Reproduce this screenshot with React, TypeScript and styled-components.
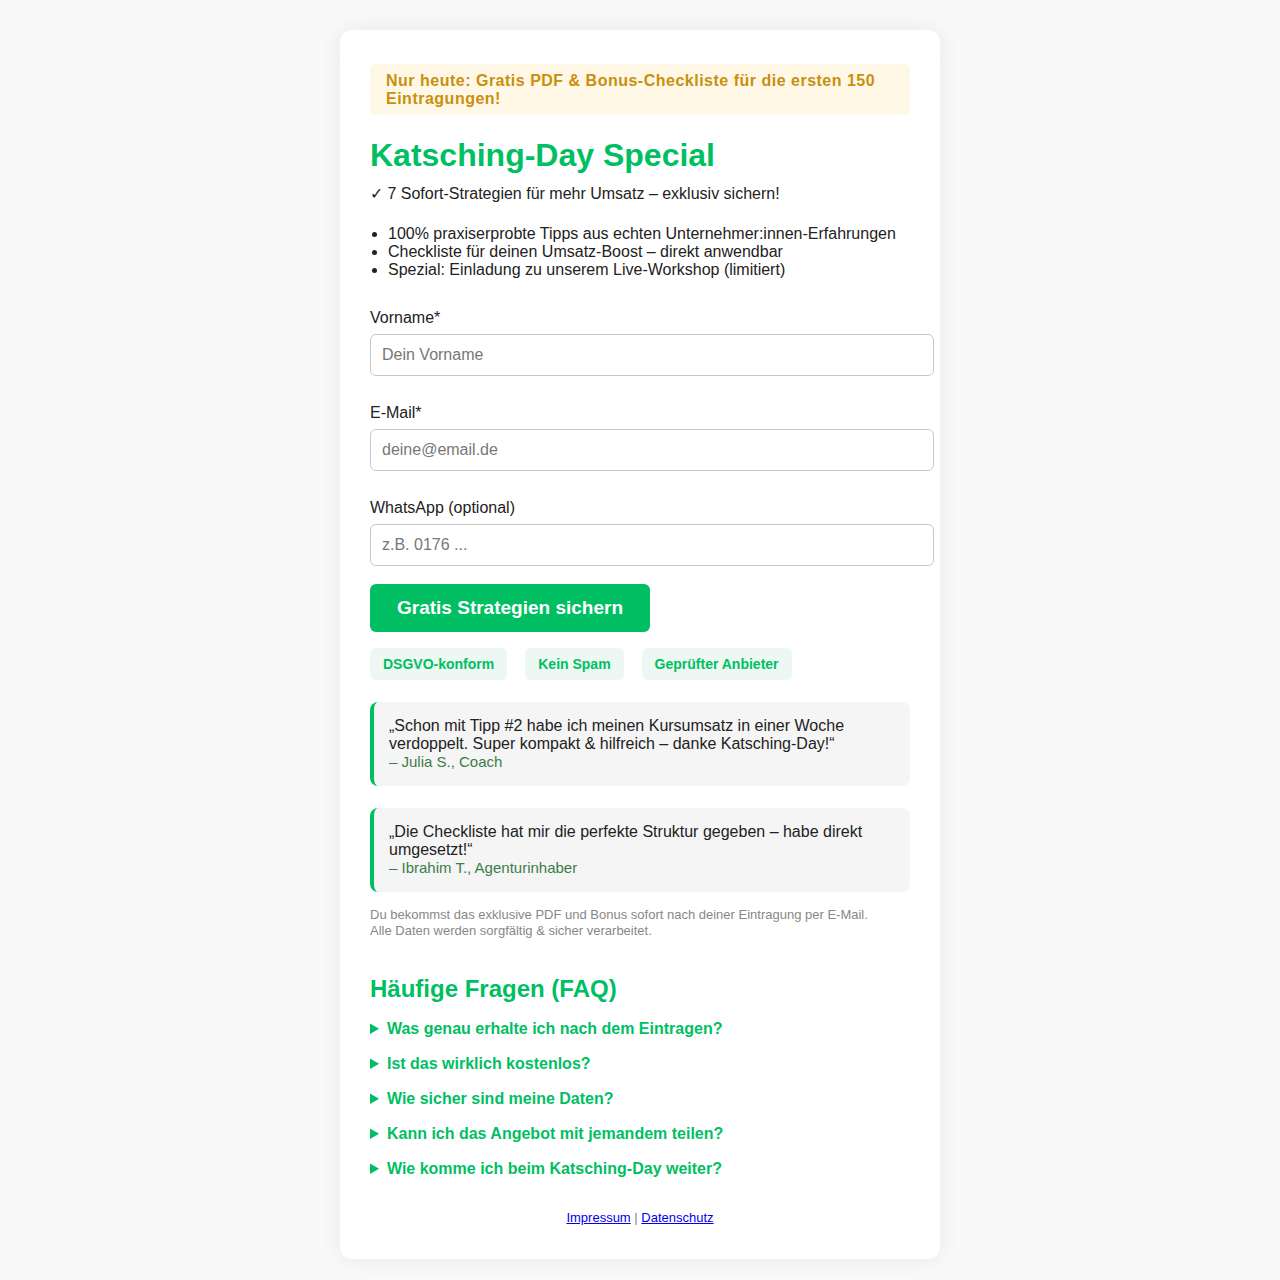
import React from 'react'
import styled, { createGlobalStyle } from 'styled-components'

const colors = {
  green: '#00bf63',
  greenDark: '#3b7d4a',
  badgeBg: '#ecf8f1',
  bannerBg: '#fff8e7',
  bannerText: '#c98f0e',
  text: '#222222',
  muted: '#888888',
  quoteBg: '#f5f5f5',
  border: '#c8c8c8'
}

const GlobalStyle = createGlobalStyle`
  html, body {
    margin: 0;
    padding: 0;
    background: #f9f9f9;
    font-family: "Liberation Sans", Arial, sans-serif;
    color: ${colors.text};
  }
`

const Page = styled.div`
  padding: 30px 0 22px;
  display: flex;
  justify-content: center;
`

const Card = styled.main`
  width: 540px;
  background: #ffffff;
  border-radius: 12px;
  padding: 34px 30px 33px;
  box-shadow: 0 0 24px rgba(0, 0, 0, 0.07);
`

const Banner = styled.div`
  background: ${colors.bannerBg};
  color: ${colors.bannerText};
  font-weight: bold;
  font-size: 16px;
  line-height: 18px;
  letter-spacing: 0.5px;
  padding: 8px 16px 7px;
  border-radius: 6px;
`

const Title = styled.h1`
  margin: 22px 0 0;
  font-size: 32px;
  line-height: 37px;
  color: ${colors.green};
`

const Subline = styled.p`
  margin: 11px 0 0;
  font-size: 16px;
  line-height: 18px;
`

const Perks = styled.ul`
  margin: 22px 0 0;
  padding-left: 18px;
  font-size: 16px;
  line-height: 18px;
`

const Form = styled.form`
  margin-top: 22px;
  display: flex;
  flex-direction: column;
`

const Field = styled.label`
  display: flex;
  flex-direction: column;
  margin-top: 8px;
  font-size: 16px;
  line-height: 18px;
  & + & {
    margin-top: 28px;
  }
`

const Input = styled.input`
  margin-top: 7px;
  width: 100%;
  box-sizing: content-box;
  padding: 11px 11px;
  border: 1px solid ${colors.border};
  border-radius: 6px;
  font-family: inherit;
  font-size: 16px;
  line-height: 18px;
  color: ${colors.text};
  &::placeholder {
    color: #777777;
  }
`

const SubmitButton = styled.button`
  align-self: flex-start;
  margin-top: 18px;
  height: 48px;
  width: 280px;
  border: none;
  border-radius: 6px;
  background: ${colors.green};
  color: #ffffff;
  font-family: inherit;
  font-weight: bold;
  font-size: 19px;
  cursor: pointer;
`

const BadgeRow = styled.div`
  display: flex;
  gap: 18px;
  margin-top: 16px;
`

const Badge = styled.span`
  display: inline-flex;
  align-items: center;
  height: 32px;
  padding: 0 13px;
  border-radius: 6px;
  background: ${colors.badgeBg};
  color: ${colors.green};
  font-weight: bold;
  font-size: 14px;
`

const Quote = styled.blockquote`
  margin: 22px 0 0;
  padding: 15px 15px 15px;
  background: ${colors.quoteBg};
  border-left: 4px solid ${colors.green};
  border-radius: 8px;
  font-size: 16px;
  line-height: 18px;
  & + & {
    margin-top: 22px;
  }
`

const Author = styled.div`
  font-size: 15px;
  line-height: 18px;
  color: ${colors.greenDark};
`

const Note = styled.p`
  margin: 15px 0 0;
  font-size: 13px;
  line-height: 16px;
  color: ${colors.muted};
`

const FaqTitle = styled.h2`
  margin: 36px 0 0;
  font-size: 24px;
  line-height: 28px;
  color: ${colors.green};
`

const FaqList = styled.div`
  margin-top: 17px;
  display: flex;
  flex-direction: column;
  gap: 17px;
`

const Question = styled.details`
  summary {
    cursor: pointer;
    color: ${colors.green};
    font-weight: bold;
    font-size: 16px;
    line-height: 18px;
  }
`

const Footer = styled.footer`
  margin-top: 32px;
  text-align: center;
  font-size: 13px;
  line-height: 16px;
  color: ${colors.muted};
  a {
    color: #0000ee;
  }
`

const perks = [
  '100% praxiserprobte Tipps aus echten Unternehmer:innen-Erfahrungen',
  'Checkliste für deinen Umsatz-Boost – direkt anwendbar',
  'Spezial: Einladung zu unserem Live-Workshop (limitiert)'
]

const quotes = [
  {
    text: '„Schon mit Tipp #2 habe ich meinen Kursumsatz in einer Woche verdoppelt. Super kompakt & hilfreich – danke Katsching-Day!“',
    author: '– Julia S., Coach'
  },
  {
    text: '„Die Checkliste hat mir die perfekte Struktur gegeben – habe direkt umgesetzt!“',
    author: '– Ibrahim T., Agenturinhaber'
  }
]

const faqs = [
  'Was genau erhalte ich nach dem Eintragen?',
  'Ist das wirklich kostenlos?',
  'Wie sicher sind meine Daten?',
  'Kann ich das Angebot mit jemandem teilen?',
  'Wie komme ich beim Katsching-Day weiter?'
]

export default function App () {
  return (
    <>
      <GlobalStyle />
      <Page>
        <Card>
          <Banner>Nur heute: Gratis PDF &amp; Bonus-Checkliste für die ersten 150 Eintragungen!</Banner>
          <Title>Katsching-Day Special</Title>
          <Subline>✓ 7 Sofort-Strategien für mehr Umsatz – exklusiv sichern!</Subline>
          <Perks>
            {perks.map((p) => <li key={p}>{p}</li>)}
          </Perks>

          <Form onSubmit={(e) => e.preventDefault()}>
            <Field>
              Vorname*
              <Input type="text" placeholder="Dein Vorname" />
            </Field>
            <Field>
              E-Mail*
              <Input type="email" placeholder="deine@email.de" />
            </Field>
            <Field>
              WhatsApp (optional)
              <Input type="tel" placeholder="z.B. 0176 ..." />
            </Field>
            <SubmitButton type="submit">Gratis Strategien sichern</SubmitButton>
          </Form>

          <BadgeRow>
            <Badge>DSGVO-konform</Badge>
            <Badge>Kein Spam</Badge>
            <Badge>Geprüfter Anbieter</Badge>
          </BadgeRow>

          {quotes.map((q) => (
            <Quote key={q.author}>
              {q.text}
              <Author>{q.author}</Author>
            </Quote>
          ))}

          <Note>
            Du bekommst das exklusive PDF und Bonus sofort nach deiner Eintragung per E-Mail.<br />
            Alle Daten werden sorgfältig &amp; sicher verarbeitet.
          </Note>

          <FaqTitle>Häufige Fragen (FAQ)</FaqTitle>
          <FaqList>
            {faqs.map((f) => (
              <Question key={f}>
                <summary>{f}</summary>
              </Question>
            ))}
          </FaqList>

          <Footer>
            <a href="#impressum">Impressum</a> | <a href="#datenschutz">Datenschutz</a>
          </Footer>
        </Card>
      </Page>
    </>
  )
}
